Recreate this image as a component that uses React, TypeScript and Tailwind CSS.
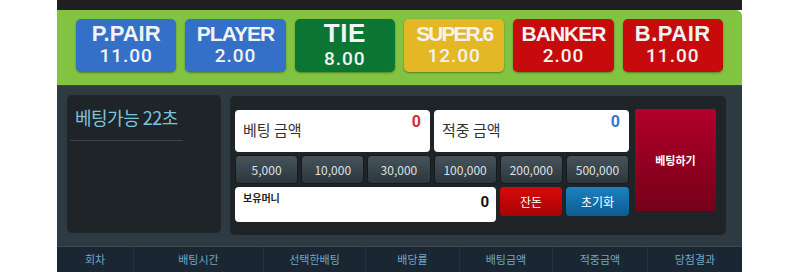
import React from "react";

const bets = [
  { label: "P.PAIR", odds: "11.00", cls: "bg-[#3470c8]", lab: "text-[22px] tracking-[0px] leading-[22px] mt-[4px]" },
  { label: "PLAYER", odds: "2.00", cls: "bg-[#3470c8]", lab: "text-[21px] tracking-[-1px] leading-[22px] mt-[4px]" },
  { label: "TIE", odds: "8.00", cls: "bg-[#0b7634]", lab: "text-[26px] tracking-[0.5px] leading-[29px] mt-0" },
  { label: "SUPER.6", odds: "12.00", cls: "bg-[#e4b824]", lab: "text-[21px] tracking-[-2px] leading-[22px] mt-[4px]" },
  { label: "BANKER", odds: "2.00", cls: "bg-[#c70a0c]", lab: "text-[21px] tracking-[-1px] leading-[22px] mt-[4px]" },
  { label: "B.PAIR", odds: "11.00", cls: "bg-[#c70a0c]", lab: "text-[22px] tracking-[0.5px] leading-[22px] mt-[4px]" },
];

const chips = ["5,000", "10,000", "30,000", "100,000", "200,000", "500,000"];

const cols = [
  { t: "회차", w: "w-[76px]" },
  { t: "배팅시간", w: "w-[130px]" },
  { t: "선택한배팅", w: "w-[102px]" },
  { t: "배당률", w: "w-[94px]" },
  { t: "배팅금액", w: "w-[93px]" },
  { t: "적중금액", w: "w-[95px]" },
  { t: "당첨결과", w: "w-[95px]" },
];

const kr = "font-['Noto_Sans_CJK_KR','Noto_Sans',sans-serif]";

export default function App() {
  return (
    <div className="w-[800px] h-[272px] bg-white overflow-hidden flex pl-[57px]">
      <div className="w-[685px] flex flex-col">
        <div className="h-[10px] bg-[#1f1f1f]" />
        <div className="h-[76px] bg-[#82c342] rounded-tr-[6px] flex gap-[9px] px-[19px] pt-[9px] border-b border-[#3a4a3a]">
          {bets.map((b) => (
            <div
              key={b.label}
              className={`flex-1 h-[53px] rounded-[5px] ${b.cls} flex flex-col items-center shadow-[0_1px_2px_rgba(0,0,0,0.35)] text-[#f3f3f3]`}
            >
              <div className={`${b.lab} font-bold font-['Liberation_Sans',Arial,sans-serif]`}>{b.label}</div>
              <div className="text-[19px] font-medium tracking-[1px] font-['Roboto',sans-serif] leading-[22px]">{b.odds}</div>
            </div>
          ))}
        </div>
        <div className="h-[160px] bg-[#2d3a42] flex pl-[10px] pt-[9px] gap-[9px]">
          <div className="w-[154px] h-[138px] bg-[#1e2428] rounded-[5px] px-[3px] pt-[10px]">
            <div className={`${kr} text-[#7dc3de] text-[18px] leading-[24px] pl-[5px] tracking-[-0.5px]`}>베팅가능 22초</div>
            <div className="mt-[11px] h-px w-[113px] bg-[#38434a]" />
          </div>
          <div className="w-[496px] h-[139px] mt-px bg-[#1e2428] rounded-[5px] flex pl-[5px] pt-[14px] gap-[6px]">
            <div className="w-[394px] flex flex-col">
              <div className="flex gap-[4px] h-[42px]">
                <div className="flex-1 bg-white rounded-[4px] relative">
                  <div className={`${kr} text-[#333] text-[15px] absolute left-[8px] top-[9px]`}>베팅 금액</div>
                  <div className="absolute right-[9px] top-[0px] text-[#d33030] font-bold text-[16px] font-['Roboto',sans-serif]">0</div>
                </div>
                <div className="flex-1 bg-white rounded-[4px] relative">
                  <div className={`${kr} text-[#333] text-[15px] absolute left-[8px] top-[9px]`}>적중 금액</div>
                  <div className="absolute right-[9px] top-[0px] text-[#2f78d0] font-bold text-[16px] font-['Roboto',sans-serif]">0</div>
                </div>
              </div>
              <div className="flex gap-[3px] h-[29px] mt-[3px]">
                {chips.map((c) => (
                  <div
                    key={c}
                    className={`flex-1 rounded-[4px] bg-gradient-to-b from-[#47545c] to-[#2c363c] border border-[#151a1d] flex items-center justify-center text-[#dde2e5] text-[12px] ${kr}`}
                  >
                    {c}
                  </div>
                ))}
              </div>
              <div className="flex gap-[4px] mt-[3px]">
                <div className="w-[261px] h-[35px] bg-white rounded-[4px] relative">
                  <div className={`${kr} absolute left-[8px] top-[3px] text-[10px] font-bold text-[#222]`}>보유머니</div>
                  <div className="absolute right-[7px] top-[4px] text-[15px] font-bold text-[#111] font-['Roboto',sans-serif]">0</div>
                </div>
                <div className={`w-[62px] h-[29px] rounded-[4px] bg-gradient-to-b from-[#d80a0a] to-[#a80404] flex items-center justify-center text-white text-[12px] ${kr}`}>잔돈</div>
                <div className={`w-[63px] h-[29px] rounded-[4px] bg-gradient-to-b from-[#1b82c2] to-[#0c5c92] flex items-center justify-center text-white text-[12px] ${kr}`}>초기화</div>
              </div>
            </div>
            <div className={`w-[81px] h-[102px] -mt-[1px] rounded-[3px] bg-gradient-to-b from-[#b3002b] to-[#760019] flex items-center justify-center text-white text-[11px] font-bold ${kr}`}>
              베팅하기
            </div>
          </div>
        </div>
        <div className="h-[26px] bg-[#1a2631] border-t border-[#3b4952] flex">
          {cols.map((c, i) => (
            <div
              key={c.t}
              className={`${c.w} flex items-center justify-center text-[11px] text-[#6fa6cc] ${kr} ${i > 0 ? "border-l border-[#223140]" : ""}`}
            >
              {c.t}
            </div>
          ))}
        </div>
      </div>
    </div>
  );
}
